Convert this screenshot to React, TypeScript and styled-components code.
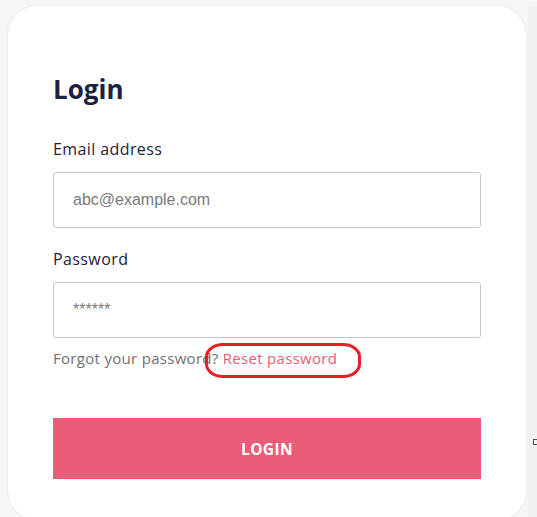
import React from 'react';
import styled, { createGlobalStyle } from 'styled-components';

const GlobalStyle = createGlobalStyle`
  html, body {
    margin: 0;
    padding: 0;
    background: #f5f6f8;
    font-family: "Open Sans", "Noto Sans", sans-serif;
    overflow: hidden;
  }
`;

const Page = styled.div`
  display: flex;
  padding: 6px 0 0 8px;
  height: 517px;
  box-sizing: border-box;
  position: relative;
`;

const Card = styled.div`
  width: 518px;
  height: 514px;
  box-sizing: border-box;
  background: #ffffff;
  border-radius: 30px;
  box-shadow: 0 0 3px rgba(0, 0, 0, 0.08);
  padding: 66px 45px 0;
  display: flex;
  flex-direction: column;
`;

const Title = styled.h1`
  margin: 0 0 32px;
  font-size: 26px;
  line-height: 34px;
  font-weight: 700;
  color: #1b2140;
`;

const Field = styled.div`
  display: flex;
  flex-direction: column;
  gap: 12px;
  margin-bottom: 20px;
`;

const Label = styled.label`
  font-size: 16px;
  line-height: 22px;
  letter-spacing: 0.4px;
  color: #1f2233;
`;

const Input = styled.input`
  height: 56px;
  box-sizing: border-box;
  border: 1px solid #c6c6c6;
  border-radius: 3px;
  padding: 0 19px;
  font-family: "Liberation Sans", Arial, sans-serif;
  font-size: 16px;
  color: #333;
  outline: none;

  &::placeholder {
    color: #7a7a7a;
  }
`;

const Helper = styled.div`
  position: relative;
  margin-top: -11px;
  font-size: 15px;
  line-height: 22px;
  letter-spacing: 0.3px;
  color: #707070;
`;

const ResetLink = styled.a`
  color: #e85c77;
  text-decoration: none;
  cursor: pointer;
`;

const Annotation = styled.span`
  position: absolute;
  left: 152px;
  top: -4px;
  width: 156px;
  height: 35px;
  border: 3.5px solid #ee1c25;
  border-radius: 18px / 14px;
  box-sizing: border-box;
  pointer-events: none;
`;

const Button = styled.button`
  margin-top: 49px;
  height: 61px;
  border: none;
  background: #eb5c78;
  color: #ffffff;
  font-family: "Open Sans", "Noto Sans", sans-serif;
  font-size: 15.5px;
  font-weight: 700;
  letter-spacing: 0.4px;
  cursor: pointer;
`;

const Gutter = styled.div`
  width: 9px;
  margin-left: 2px;
  background: #f0f1f3;
  position: relative;
`;

const Marker = styled.span`
  position: absolute;
  left: 5px;
  top: 433px;
  width: 4px;
  height: 4px;
  border: 1px solid #555;
`;

export default function App() {
  return (
    <>
      <GlobalStyle />
      <Page>
        <Card>
          <Title>Login</Title>
          <Field>
            <Label>Email address</Label>
            <Input type="email" placeholder="abc@example.com" />
          </Field>
          <Field>
            <Label>Password</Label>
            <Input type="password" placeholder="******" />
          </Field>
          <Helper>
            Forgot your password? <ResetLink>Reset password</ResetLink>
            <Annotation />
          </Helper>
          <Button>LOGIN</Button>
        </Card>
        <Gutter>
          <Marker />
        </Gutter>
      </Page>
    </>
  );
}
